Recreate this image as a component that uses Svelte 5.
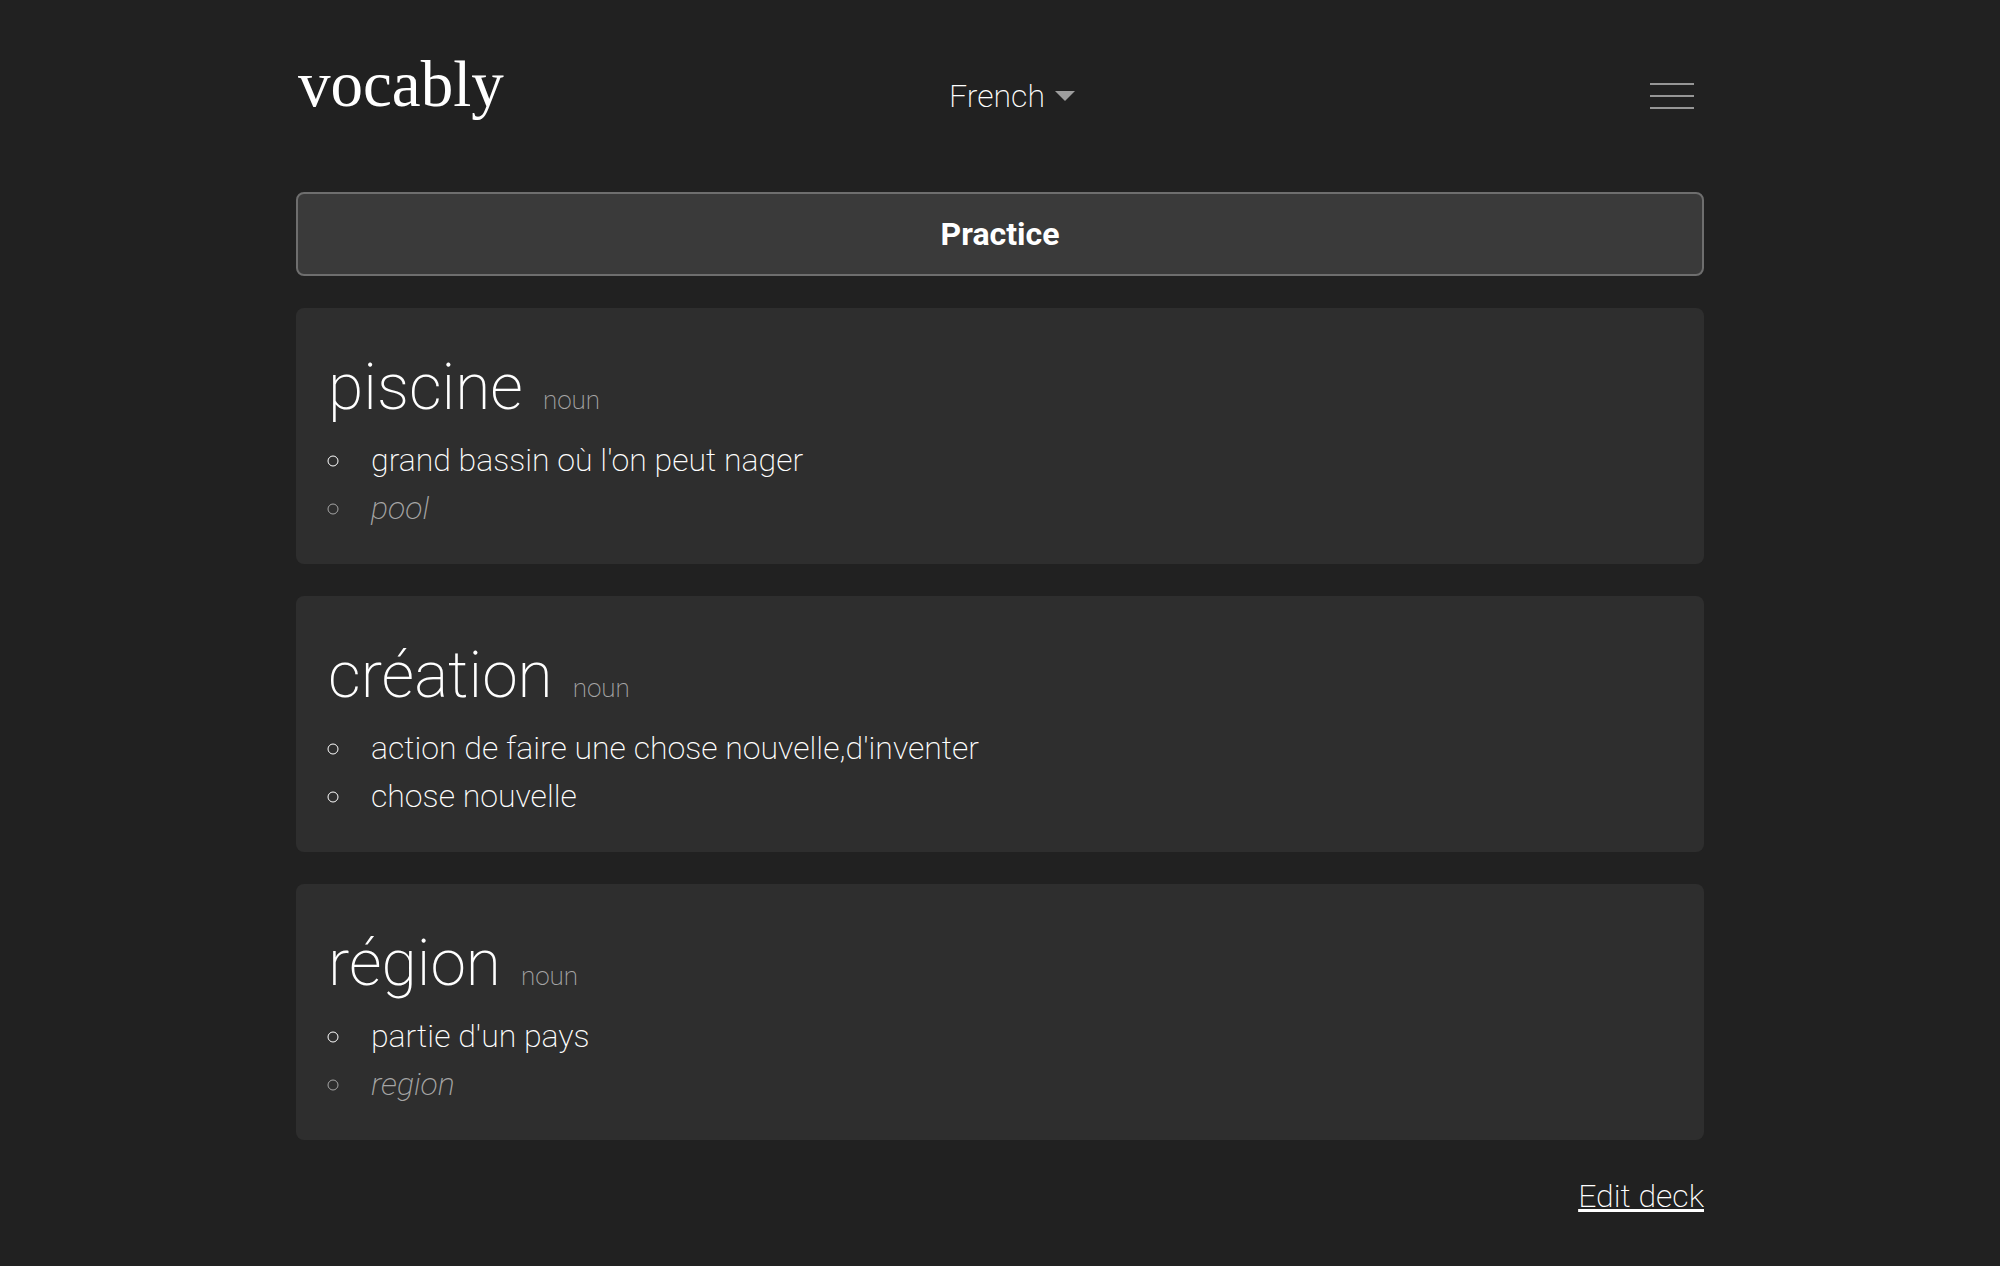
<script>
  const cards = [
    { word: 'piscine', kind: 'noun', items: [{ text: "grand bassin où l'on peut nager" }, { text: 'pool', translation: true }] },
    { word: 'création', kind: 'noun', items: [{ text: "action de faire une chose nouvelle,d'inventer" }, { text: 'chose nouvelle' }] },
    { word: 'région', kind: 'noun', items: [{ text: "partie d'un pays" }, { text: 'region', translation: true }] }
  ];
</script>

<div class="page">
  <header>
    <a class="logo" href="#home">vocably</a>
    <button class="language" type="button">
      French
      <svg width="20" height="10" viewBox="0 0 20 10" aria-hidden="true"><path d="M0 0h20L10 10z" /></svg>
    </button>
    <button class="menu" type="button" aria-label="Menu">
      <svg width="44" height="28" viewBox="0 0 44 28" aria-hidden="true"><path d="M0 2h44M0 14h44M0 26h44" /></svg>
    </button>
  </header>
  <main>
    <button class="practice" type="button">Practice</button>
    {#each cards as card}
      <article>
        <div class="title"><h2>{card.word}</h2><span>{card.kind}</span></div>
        <ul>
          {#each card.items as item}
            <li class:translation={item.translation}>{item.text}</li>
          {/each}
        </ul>
      </article>
    {/each}
  </main>
  <footer><a href="#edit">Edit deck</a></footer>
</div>

<style>
  :global(body) {
    margin: 0;
    background: #212121;
  }
  .page {
    box-sizing: border-box;
    max-width: 1472px;
    margin: 0 auto;
    padding: 0 32px;
    color: #fff;
    font: 200 32px/48px Roboto, sans-serif;
  }
  header {
    display: grid;
    grid-template-columns: 1fr auto 1fr;
    align-items: center;
    height: 192px;
  }
  .logo {
    justify-self: start;
    padding: 0 0 24px 2px;
    color: #fff;
    font: 400 65px/80px "Liberation Serif", serif;
    text-decoration: none;
  }
  button {
    color: inherit;
    font: inherit;
    background: none;
    border: 0;
    padding: 0;
    cursor: pointer;
  }
  .language {
    display: flex;
    align-items: center;
    gap: 10px;
    padding-left: 24px;
  }
  .language svg { fill: #9e9e9e; }
  .menu {
    justify-self: end;
    display: flex;
    padding: 0 10px;
  }
  .menu svg {
    stroke: #969696;
    stroke-width: 2;
  }
  main {
    display: flex;
    flex-direction: column;
    gap: 32px;
  }
  .practice {
    padding: 16px;
    border: 2px solid #6e6e6e;
    border-radius: 8px;
    background: #3a3a3a;
    font-weight: 700;
  }
  article {
    padding: 32px;
    border-radius: 8px;
    background: #2e2e2e;
  }
  .title {
    display: flex;
    align-items: baseline;
    gap: 20px;
  }
  h2 {
    margin: 0;
    font: 200 64px/96px Roboto, sans-serif;
  }
  .title span {
    color: #a6a6a6;
    font-size: 26px;
  }
  ul {
    margin: 0;
    padding: 0 0 0 27px;
    list-style: circle;
  }
  li { padding-left: 16px; }
  .translation {
    color: #a6a6a6;
    font-style: italic;
  }
  footer {
    padding: 32px 0;
    text-align: right;
  }
  footer a {
    color: #fff;
    text-decoration-thickness: 3px;
  }
</style>
